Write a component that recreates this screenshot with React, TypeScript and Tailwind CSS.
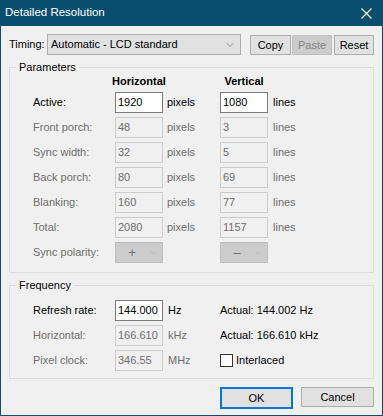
import { ChevronDown } from "lucide-react";

const dim = "text-[#6d6d6d]";

function Box({ value, enabled }: { value: string; enabled?: boolean }) {
  return (
    <div
      className={
        enabled
          ? "h-[21px] w-[48px] border border-[#7a7a7a] bg-white pl-[2px] leading-[19px] text-black"
          : "h-[21px] w-[48px] border border-[#cccccc] bg-[#f0f0f0] pl-[2px] leading-[19px] text-[#6d6d6d]"
      }
    >
      {value}
    </div>
  );
}

function Polarity({ sign }: { sign: string }) {
  return (
    <div className="flex h-[21px] w-[48px] items-center border border-[#bfbfbf] bg-[#cccccc] text-[#6d6d6d]">
      <span className="w-[32px] text-center text-[13px]">{sign}</span>
      <ChevronDown className="h-[10px] w-[10px] text-[#a8a8a8]" strokeWidth={1.2} />
    </div>
  );
}

function Header({ children }: { children: string }) {
  return (
    <div className="flex h-[13px] w-[48px] justify-center whitespace-nowrap font-bold leading-[13px] text-black">
      {children}
    </div>
  );
}

const rows = [
  ["Front porch:", "48", "3"],
  ["Sync width:", "32", "5"],
  ["Back porch:", "80", "69"],
  ["Blanking:", "160", "77"],
  ["Total:", "2080", "1157"],
];

function Btn({ label, disabled, primary, w }: { label: string; disabled?: boolean; primary?: boolean; w: string }) {
  if (disabled)
    return (
      <div className={`${w} flex h-[20px] items-center justify-center border border-[#bfbfbf] bg-[#cccccc] text-[#838383]`}>
        {label}
      </div>
    );
  return (
    <div
      className={`${w} flex items-center justify-center bg-[#e1e1e1] text-black ${
        primary ? "h-[22px] border-2 border-[#0078d7]" : "h-[20px] border border-[#adadad]"
      }`}
    >
      {label}
    </div>
  );
}

export default function App() {
  return (
    <div className="flex h-[416px] w-[383px] flex-col border border-t-0 border-[#0a4e6e] bg-[#f0f0f0] font-['Liberation_Sans',Arial,sans-serif] text-[11px] text-black">
      <div className="flex h-[26px] shrink-0 items-center justify-between bg-[#0a4e6e] pl-[4px] pr-[10px] text-[11.5px] text-white">
        <span>Detailed Resolution</span>
        <svg width="11" height="11" viewBox="0 0 11 11" stroke="white" strokeWidth="1.1">
          <path d="M0.5 0.5 L10.5 10.5 M10.5 0.5 L0.5 10.5" />
        </svg>
      </div>

      <div className="flex flex-col px-[8px]">
        <div className="mt-[8px] flex items-end">
          <span className="w-[38px] shrink-0 self-center whitespace-nowrap">Timing:</span>
          <div className="flex h-[21px] w-[194px] items-center justify-between border border-[#adadad] bg-[#e1e1e1] pl-[3px] pr-[4px]">
            <span>Automatic - LCD standard</span>
            <ChevronDown className="h-[12px] w-[12px] text-[#555]" strokeWidth={1.2} />
          </div>
          <div className="ml-[9px] flex gap-[1px]">
            <Btn label="Copy" w="w-[41px]" />
            <Btn label="Paste" w="w-[40px]" disabled />
          </div>
          <div className="ml-[2px]">
            <Btn label="Reset" w="w-[40px]" />
          </div>
        </div>

        <fieldset className="mt-[4px] border border-[#dcdcdc] pb-[9px]">
          <legend className="ml-[6px] px-[3px] leading-[16px]">Parameters</legend>
          <div className="grid grid-cols-[82px_48px_57px_48px_1fr] items-center gap-y-[4px] pl-[23px]">
            <div />
            <Header>Horizontal</Header>
            <div />
            <Header>Vertical</Header>
            <div />

            <span>Active:</span>
            <Box value="1920" enabled />
            <span className="pl-[4px]">pixels</span>
            <Box value="1080" enabled />
            <span className="pl-[5px]">lines</span>

            {rows.map(([label, h, v]) => (
              <div key={label} className="contents">
                <span className={dim}>{label}</span>
                <Box value={h} />
                <span className={`pl-[4px] ${dim}`}>pixels</span>
                <Box value={v} />
                <span className={`pl-[5px] ${dim}`}>lines</span>
              </div>
            ))}

            <span className={dim}>Sync polarity:</span>
            <Polarity sign="+" />
            <div />
            <Polarity sign="–" />
            <div />
          </div>
        </fieldset>

        <fieldset className="mt-[4px] border border-[#dcdcdc] pb-[7px]">
          <legend className="ml-[6px] px-[3px] leading-[16px]">Frequency</legend>
          <div className="grid grid-cols-[82px_48px_57px_1fr] items-center gap-y-[4px] pl-[23px] pt-[7px]">
            <span>Refresh rate:</span>
            <Box value="144.000" enabled />
            <span className="pl-[5px]">Hz</span>
            <span>Actual: 144.002 Hz</span>

            <span className={dim}>Horizontal:</span>
            <Box value="166.610" />
            <span className={`pl-[5px] ${dim}`}>kHz</span>
            <span>Actual: 166.610 kHz</span>

            <span className={dim}>Pixel clock:</span>
            <Box value="346.55" />
            <span className={`pl-[5px] ${dim}`}>MHz</span>
            <div className="flex items-center gap-[3px]">
              <div className="h-[13px] w-[13px] border border-[#333333] bg-white" />
              <span>Interlaced</span>
            </div>
          </div>
        </fieldset>

        <div className="mt-[8px] flex justify-end gap-[8px]">
          <Btn label="OK" w="w-[73px]" primary />
          <Btn label="Cancel" w="w-[73px]" />
        </div>
      </div>
    </div>
  );
}
